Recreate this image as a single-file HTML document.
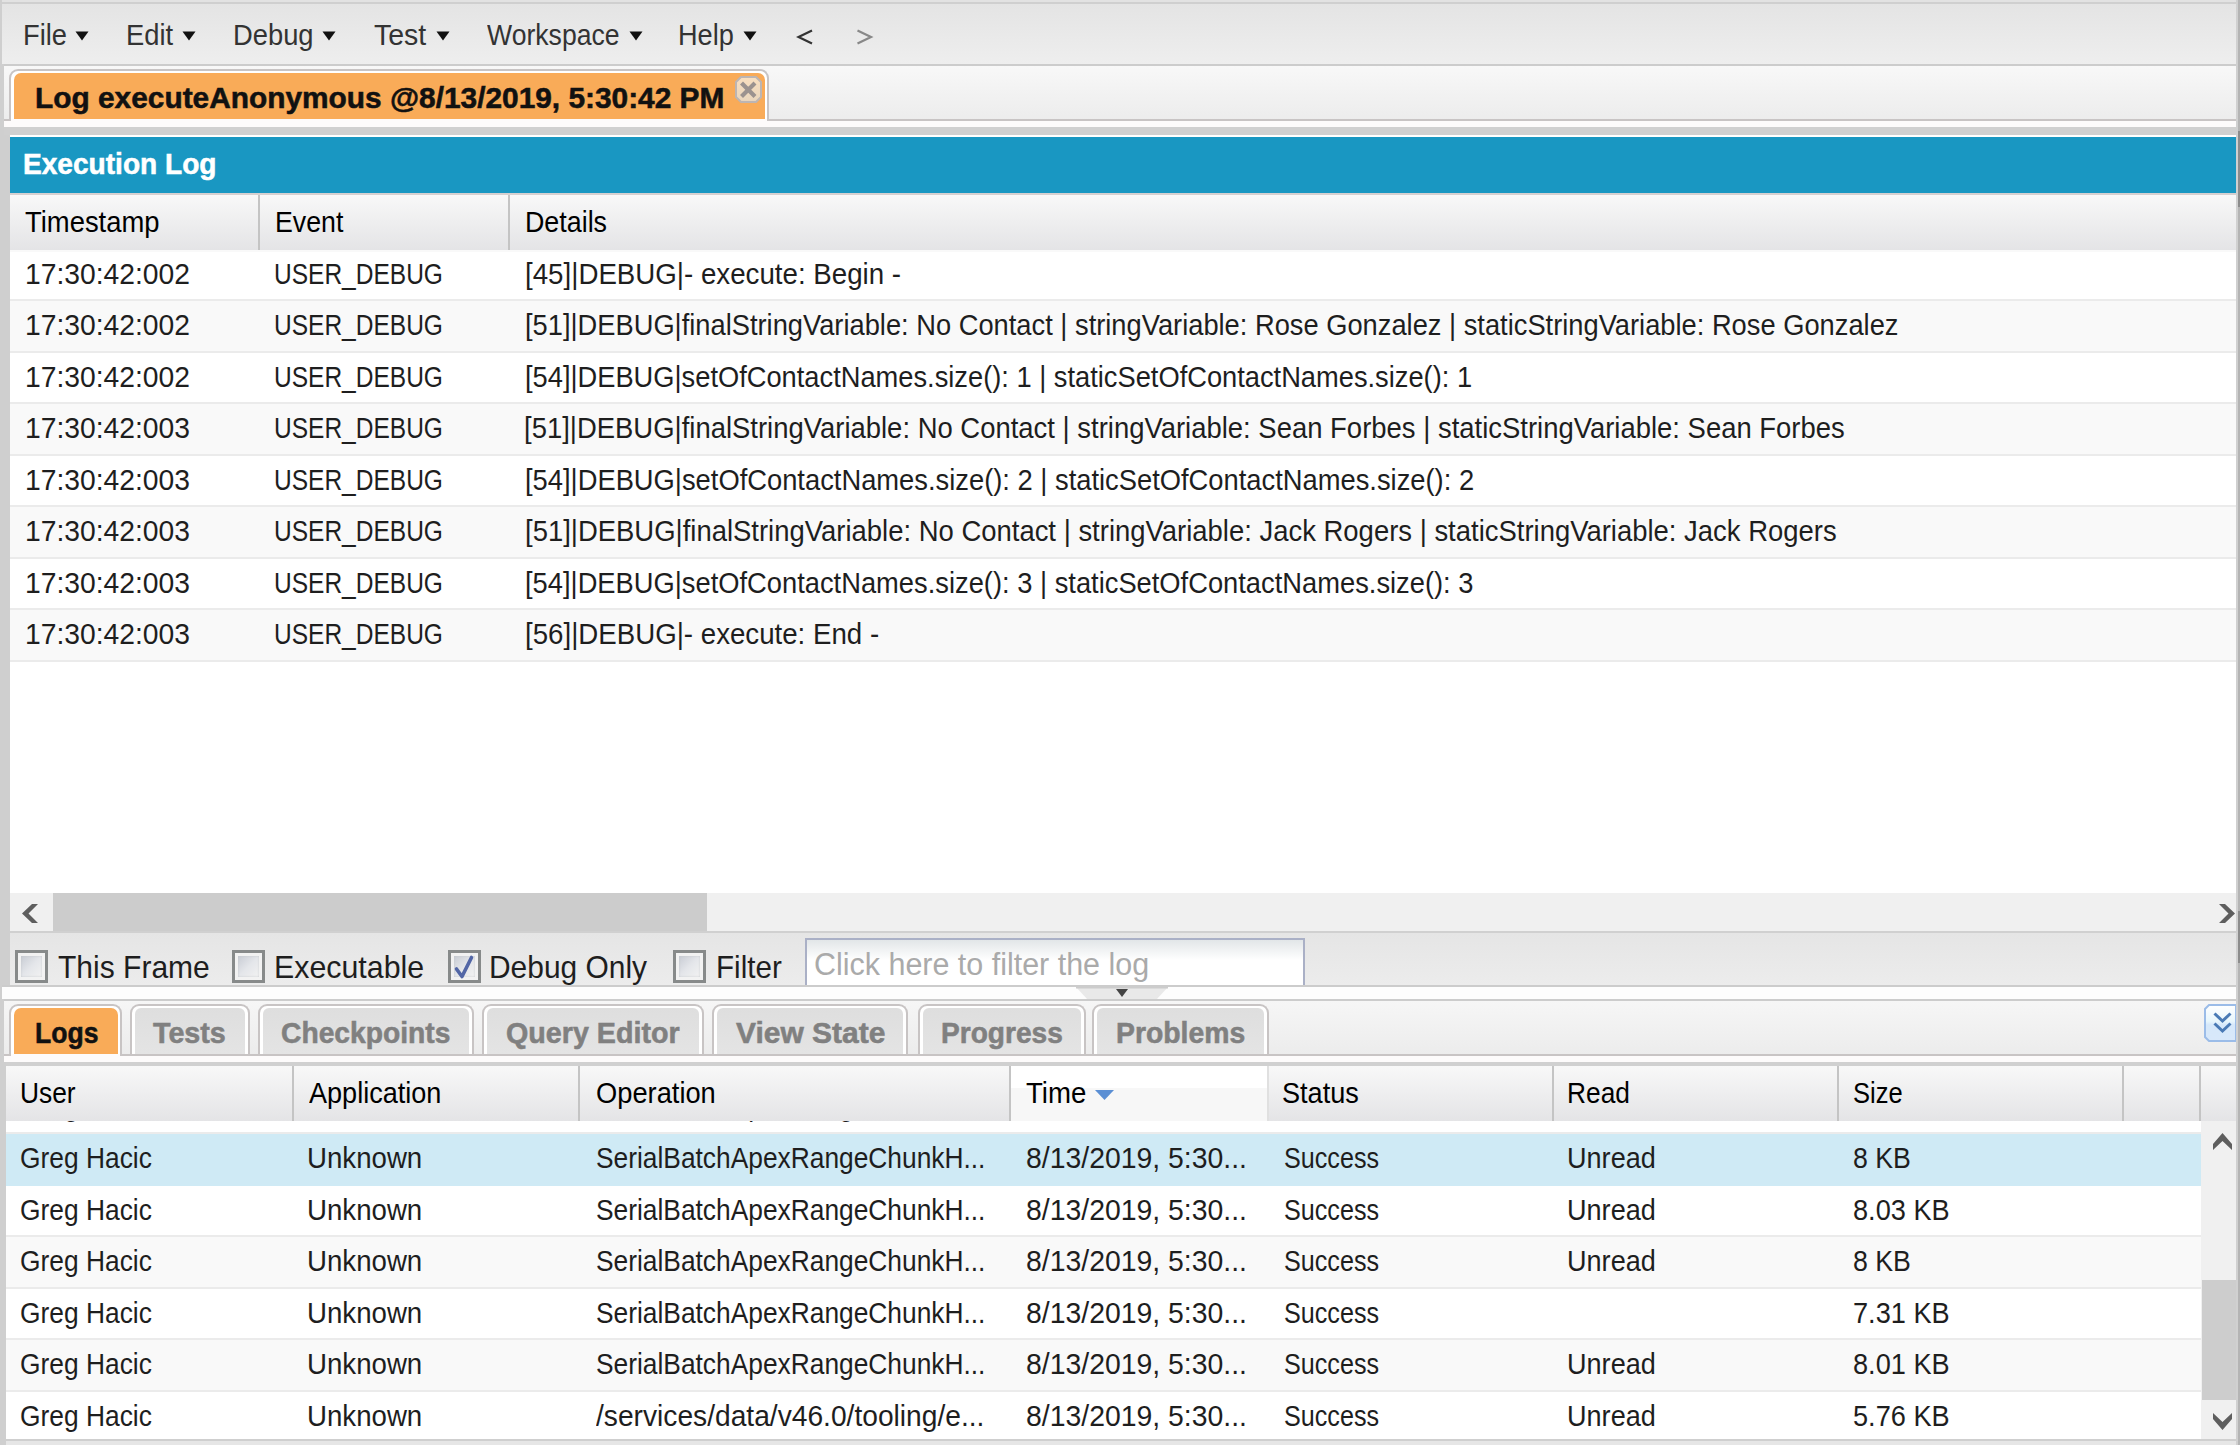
<!DOCTYPE html>
<html><head><meta charset="utf-8"><style>
html,body{margin:0;padding:0;overflow:hidden;}
body{width:2240px;height:1445px;overflow:hidden;position:relative;background:#fff;font-family:"Liberation Sans",sans-serif;}
body div, body svg{position:absolute;}
.t{white-space:pre;transform-origin:0 0;}
</style></head><body><div style="left:0px;top:0px;width:2240px;height:1445px;background:#ffffff;"></div><div style="left:0px;top:0px;width:2236px;height:2px;background:#e2e2e2;"></div><div style="left:0px;top:2px;width:2236px;height:2px;background:#cfcfcf;"></div><div style="left:2px;top:4px;width:2234px;height:60px;background:linear-gradient(#e4e4e4,#eeeeee);"></div><div style="left:0px;top:64px;width:2236px;height:2px;background:#cccccc;"></div><div style="left:0px;top:0px;width:2px;height:64px;background:#cfcfcf;"></div><div style="left:0px;top:64px;width:4px;height:63px;background:#cfcfcf;"></div><div style="left:0px;top:127px;width:10px;height:860px;background:#cfcfcf;"></div><div style="left:0px;top:987px;width:2px;height:12px;background:#cfcfcf;"></div><div style="left:0px;top:999px;width:4px;height:63px;background:#cfcfcf;"></div><div style="left:0px;top:1062px;width:6px;height:383px;background:#cfcfcf;"></div><div style="left:2236px;top:0px;width:2px;height:1445px;background:#d0d0d0;"></div><div style="left:2238px;top:0px;width:2px;height:1445px;background:#b4b4b4;"></div><div style="left:2238px;top:131px;width:2px;height:76px;background:#8c8c8c;"></div><div style="left:2238px;top:911px;width:2px;height:52px;background:#8c8c8c;"></div><div class="t" style="left:22.84px;top:21px;font-size:29px;line-height:29px;color:#333333;transform:scaleX(0.9412);">File</div><svg style="left:75px;top:31px" width="14" height="10"><path d="M0.5 0.5 H13.5 L7 9.5 Z" fill="#111"/></svg><div class="t" style="left:125.91px;top:21px;font-size:29px;line-height:29px;color:#333333;transform:scaleX(0.9419);">Edit</div><svg style="left:182px;top:31px" width="14" height="10"><path d="M0.5 0.5 H13.5 L7 9.5 Z" fill="#111"/></svg><div class="t" style="left:232.92px;top:21px;font-size:29px;line-height:29px;color:#333333;transform:scaleX(0.9426);">Debug</div><svg style="left:322px;top:31px" width="14" height="10"><path d="M0.5 0.5 H13.5 L7 9.5 Z" fill="#111"/></svg><div class="t" style="left:374.00px;top:21px;font-size:29px;line-height:29px;color:#333333;transform:scaleX(0.9822);">Test</div><svg style="left:436px;top:31px" width="14" height="10"><path d="M0.5 0.5 H13.5 L7 9.5 Z" fill="#111"/></svg><div class="t" style="left:487.00px;top:21px;font-size:29px;line-height:29px;color:#333333;transform:scaleX(0.9173);">Workspace</div><svg style="left:629px;top:31px" width="14" height="10"><path d="M0.5 0.5 H13.5 L7 9.5 Z" fill="#111"/></svg><div class="t" style="left:677.88px;top:21px;font-size:29px;line-height:29px;color:#333333;transform:scaleX(0.9363);">Help</div><svg style="left:743px;top:31px" width="14" height="10"><path d="M0.5 0.5 H13.5 L7 9.5 Z" fill="#111"/></svg><svg style="left:796px;top:29px" width="18" height="16"><path d="M16 1.5 L2.5 8 L16 14.5" fill="none" stroke="#333" stroke-width="2.2"/></svg><svg style="left:856px;top:29px" width="18" height="16"><path d="M1.5 1.5 L15 8 L1.5 14.5" fill="none" stroke="#888" stroke-width="2.2"/></svg><div style="left:4px;top:66px;width:2232px;height:55px;background:linear-gradient(#f8f8f8,#ececec);"></div><div style="left:4px;top:119px;width:2232px;height:2px;background:#c8c4c4;"></div><div style="left:4px;top:121px;width:2232px;height:6px;background:#fdfbfb;"></div><div style="left:9px;top:69px;width:760px;height:52px;background:#ffffff;border:2px solid #c8c4c4;border-bottom:none;border-radius:9px 9px 0 0;box-sizing:border-box;"></div><div style="left:14px;top:73px;width:751px;height:48px;background:#f9ab58;border-radius:7px 7px 0 0;"></div><div style="left:11px;top:119px;width:756px;height:2px;background:#fdfbfb;"></div><div class="t" style="left:35.19px;top:84px;font-size:29px;line-height:29px;font-weight:bold;-webkit-text-stroke:0.55px currentColor;color:#111111;transform:scaleX(1.0293);">Log executeAnonymous @8/13/2019, 5:30:42 PM</div><svg style="left:735px;top:76px" width="27" height="27"><defs><linearGradient id="xg" x1="0" y1="0" x2="0" y2="1"><stop offset="0" stop-color="#f9dfc0"/><stop offset="1" stop-color="#e8d5bd"/></linearGradient></defs><path d="M6 1 H21 L26 6 V21 L21 26 H6 L1 21 V6 Z" fill="url(#xg)" stroke="#bdb5b2" stroke-width="2"/><path d="M8 8.5 L18.5 19 M18.5 8.5 L8 19" stroke="#9b928f" stroke-width="4.2" stroke-linecap="square"/></svg><div style="left:4px;top:127px;width:2232px;height:8px;background:#d0d0d0;"></div><div style="left:10px;top:135px;width:2226px;height:2px;background:#ffffff;"></div><div style="left:10px;top:137px;width:2226px;height:56px;background:#1997c2;"></div><div class="t" style="left:23.38px;top:150px;font-size:29px;line-height:29px;font-weight:bold;-webkit-text-stroke:0.55px currentColor;color:#ffffff;transform:scaleX(0.9683);">Execution Log</div><div style="left:10px;top:193px;width:2226px;height:2px;background:#d6d0d0;"></div><div style="left:10px;top:195px;width:2226px;height:55px;background:linear-gradient(#f8f8f8,#e4e4e6);"></div><div style="left:258px;top:195px;width:2px;height:55px;background:#c4c4c4;"></div><div style="left:508px;top:195px;width:2px;height:55px;background:#c4c4c4;"></div><div class="t" style="left:25.40px;top:208px;font-size:29px;line-height:29px;color:#000000;transform:scaleX(0.9451);">Timestamp</div><div class="t" style="left:274.74px;top:208px;font-size:29px;line-height:29px;color:#000000;transform:scaleX(0.9222);">Event</div><div class="t" style="left:524.72px;top:208px;font-size:29px;line-height:29px;color:#000000;transform:scaleX(0.9251);">Details</div><div style="left:10px;top:250px;width:2226px;height:49px;background:#ffffff;"></div><div style="left:10px;top:299px;width:2226px;height:2px;background:#ebebeb;"></div><div class="t" style="left:24.77px;top:260px;font-size:29px;line-height:29px;color:#1e1e1e;transform:scaleX(0.9742);">17:30:42:002</div><div class="t" style="left:273.96px;top:260px;font-size:29px;line-height:29px;color:#1e1e1e;transform:scaleX(0.8453);">USER_DEBUG</div><div class="t" style="left:525.18px;top:260px;font-size:29px;line-height:29px;color:#1e1e1e;transform:scaleX(0.9549);">[45]|DEBUG|- execute: Begin -</div><div style="left:10px;top:301px;width:2226px;height:50px;background:#f9f9f9;"></div><div style="left:10px;top:351px;width:2226px;height:2px;background:#ebebeb;"></div><div class="t" style="left:24.77px;top:311px;font-size:29px;line-height:29px;color:#1e1e1e;transform:scaleX(0.9742);">17:30:42:002</div><div class="t" style="left:273.96px;top:311px;font-size:29px;line-height:29px;color:#1e1e1e;transform:scaleX(0.8453);">USER_DEBUG</div><div class="t" style="left:525.19px;top:311px;font-size:29px;line-height:29px;color:#1e1e1e;transform:scaleX(0.9408);">[51]|DEBUG|finalStringVariable: No Contact | stringVariable: Rose Gonzalez | staticStringVariable: Rose Gonzalez</div><div style="left:10px;top:353px;width:2226px;height:49px;background:#ffffff;"></div><div style="left:10px;top:402px;width:2226px;height:2px;background:#ebebeb;"></div><div class="t" style="left:24.77px;top:363px;font-size:29px;line-height:29px;color:#1e1e1e;transform:scaleX(0.9742);">17:30:42:002</div><div class="t" style="left:273.96px;top:363px;font-size:29px;line-height:29px;color:#1e1e1e;transform:scaleX(0.8453);">USER_DEBUG</div><div class="t" style="left:525.19px;top:363px;font-size:29px;line-height:29px;color:#1e1e1e;transform:scaleX(0.9402);">[54]|DEBUG|setOfContactNames.size(): 1 | staticSetOfContactNames.size(): 1</div><div style="left:10px;top:404px;width:2226px;height:50px;background:#f9f9f9;"></div><div style="left:10px;top:454px;width:2226px;height:2px;background:#ebebeb;"></div><div class="t" style="left:24.77px;top:414px;font-size:29px;line-height:29px;color:#1e1e1e;transform:scaleX(0.9742);">17:30:42:003</div><div class="t" style="left:273.96px;top:414px;font-size:29px;line-height:29px;color:#1e1e1e;transform:scaleX(0.8453);">USER_DEBUG</div><div class="t" style="left:524.20px;top:414px;font-size:29px;line-height:29px;color:#1e1e1e;transform:scaleX(0.9465);">[51]|DEBUG|finalStringVariable: No Contact | stringVariable: Sean Forbes | staticStringVariable: Sean Forbes</div><div style="left:10px;top:456px;width:2226px;height:49px;background:#ffffff;"></div><div style="left:10px;top:505px;width:2226px;height:2px;background:#ebebeb;"></div><div class="t" style="left:24.77px;top:466px;font-size:29px;line-height:29px;color:#1e1e1e;transform:scaleX(0.9742);">17:30:42:003</div><div class="t" style="left:273.96px;top:466px;font-size:29px;line-height:29px;color:#1e1e1e;transform:scaleX(0.8453);">USER_DEBUG</div><div class="t" style="left:525.19px;top:466px;font-size:29px;line-height:29px;color:#1e1e1e;transform:scaleX(0.9422);">[54]|DEBUG|setOfContactNames.size(): 2 | staticSetOfContactNames.size(): 2</div><div style="left:10px;top:507px;width:2226px;height:50px;background:#f9f9f9;"></div><div style="left:10px;top:557px;width:2226px;height:2px;background:#ebebeb;"></div><div class="t" style="left:24.77px;top:517px;font-size:29px;line-height:29px;color:#1e1e1e;transform:scaleX(0.9742);">17:30:42:003</div><div class="t" style="left:273.96px;top:517px;font-size:29px;line-height:29px;color:#1e1e1e;transform:scaleX(0.8453);">USER_DEBUG</div><div class="t" style="left:525.19px;top:517px;font-size:29px;line-height:29px;color:#1e1e1e;transform:scaleX(0.9466);">[51]|DEBUG|finalStringVariable: No Contact | stringVariable: Jack Rogers | staticStringVariable: Jack Rogers</div><div style="left:10px;top:559px;width:2226px;height:49px;background:#ffffff;"></div><div style="left:10px;top:608px;width:2226px;height:2px;background:#ebebeb;"></div><div class="t" style="left:24.77px;top:569px;font-size:29px;line-height:29px;color:#1e1e1e;transform:scaleX(0.9742);">17:30:42:003</div><div class="t" style="left:273.96px;top:569px;font-size:29px;line-height:29px;color:#1e1e1e;transform:scaleX(0.8453);">USER_DEBUG</div><div class="t" style="left:525.19px;top:569px;font-size:29px;line-height:29px;color:#1e1e1e;transform:scaleX(0.9416);">[54]|DEBUG|setOfContactNames.size(): 3 | staticSetOfContactNames.size(): 3</div><div style="left:10px;top:610px;width:2226px;height:50px;background:#f9f9f9;"></div><div style="left:10px;top:660px;width:2226px;height:2px;background:#ebebeb;"></div><div class="t" style="left:24.77px;top:620px;font-size:29px;line-height:29px;color:#1e1e1e;transform:scaleX(0.9742);">17:30:42:003</div><div class="t" style="left:273.96px;top:620px;font-size:29px;line-height:29px;color:#1e1e1e;transform:scaleX(0.8453);">USER_DEBUG</div><div class="t" style="left:525.18px;top:620px;font-size:29px;line-height:29px;color:#1e1e1e;transform:scaleX(0.9537);">[56]|DEBUG|- execute: End -</div><div style="left:10px;top:250px;width:2226px;height:2px;background:#f9f9f9;"></div><div style="left:10px;top:893px;width:2226px;height:38px;background:#f0f0f0;"></div><div style="left:53px;top:893px;width:654px;height:38px;background:#cccccc;"></div><svg style="left:22px;top:904px" width="17" height="19"><path d="M16 0 H10 L0 9.5 L10 19 H16 L6.5 9.5 Z" fill="#5e5e5e"/></svg><svg style="left:2219px;top:904px" width="17" height="19"><path d="M0 0 H6 L16 9.5 L6 19 H0 L9.5 9.5 Z" fill="#5e5e5e"/></svg><div style="left:10px;top:931px;width:2226px;height:2px;background:#d0d0d0;"></div><div style="left:10px;top:933px;width:2226px;height:52px;background:linear-gradient(#e5e5e5,#ececec);"></div><div style="left:2px;top:985px;width:2234px;height:2px;background:#cccccc;"></div><div style="left:2px;top:987px;width:2234px;height:12px;background:#fdfdfd;"></div><div style="left:15px;top:950px;width:33px;height:33px;box-sizing:border-box;border:3px solid #878a8a;background:#f2f2f2;"></div><div style="left:21px;top:956px;width:21px;height:21px;background:linear-gradient(135deg,#c8ccd4 0%,#e4e6ea 50%,#f2f2f2 100%);box-shadow:inset 0 0 2px #c0c4c8;"></div><div class="t" style="left:58.00px;top:951px;font-size:32px;line-height:32px;color:#1e1e1e;transform:scaleX(0.9383);">This Frame</div><div style="left:232px;top:950px;width:33px;height:33px;box-sizing:border-box;border:3px solid #878a8a;background:#f2f2f2;"></div><div style="left:238px;top:956px;width:21px;height:21px;background:linear-gradient(135deg,#c8ccd4 0%,#e4e6ea 50%,#f2f2f2 100%);box-shadow:inset 0 0 2px #c0c4c8;"></div><div class="t" style="left:274.15px;top:951px;font-size:32px;line-height:32px;color:#1e1e1e;transform:scaleX(0.9485);">Executable</div><div style="left:448px;top:950px;width:33px;height:33px;box-sizing:border-box;border:3px solid #878a8a;background:#f2f2f2;"></div><div style="left:454px;top:956px;width:21px;height:21px;background:linear-gradient(135deg,#c8ccd4 0%,#e4e6ea 50%,#f2f2f2 100%);box-shadow:inset 0 0 2px #c0c4c8;"></div><svg style="left:448px;top:950px" width="33" height="33"><path d="M8.5 19 L14 26.5 L23.5 7.5" fill="none" stroke="#5266a6" stroke-width="3.6" stroke-linecap="round" stroke-linejoin="round"/></svg><div class="t" style="left:488.97px;top:951px;font-size:32px;line-height:32px;color:#1e1e1e;transform:scaleX(0.9351);">Debug Only</div><div style="left:673px;top:950px;width:33px;height:33px;box-sizing:border-box;border:3px solid #878a8a;background:#f2f2f2;"></div><div style="left:679px;top:956px;width:21px;height:21px;background:linear-gradient(135deg,#c8ccd4 0%,#e4e6ea 50%,#f2f2f2 100%);box-shadow:inset 0 0 2px #c0c4c8;"></div><div class="t" style="left:715.75px;top:951px;font-size:32px;line-height:32px;color:#1e1e1e;transform:scaleX(0.9248);">Filter</div><div style="left:805px;top:938px;width:500px;height:47px;box-sizing:border-box;border:2px solid #aab0c6;border-bottom:none;background:linear-gradient(#e2e6e8,#ffffff 45%);"></div><div class="t" style="left:814.20px;top:949px;font-size:31px;line-height:31px;color:#aaaaaa;transform:scaleX(0.9824);">Click here to filter the log</div><svg style="left:1076px;top:987px" width="92" height="14"><path d="M0 0 H92 L80 13 H12 Z" fill="#e9e9e9"/><path d="M0 0 H92" stroke="#cccccc" stroke-width="3"/><path d="M40 2 H52 L46 10 Z" fill="#444"/></svg><div style="left:4px;top:999px;width:2232px;height:2px;background:#cccccc;"></div><div style="left:4px;top:1001px;width:2232px;height:53px;background:linear-gradient(#f6f6f6,#ececec);"></div><div style="left:4px;top:1054px;width:2232px;height:2px;background:#c8c4c4;"></div><div style="left:4px;top:1056px;width:2232px;height:6px;background:#fdfbfb;"></div><div style="left:6px;top:1062px;width:2230px;height:4px;background:#d0d0d0;"></div><div style="left:9px;top:1004px;width:113px;height:52px;background:#ffffff;border:2px solid #c8c4c4;border-bottom:none;border-radius:9px 9px 0 0;box-sizing:border-box;"></div><div style="left:14px;top:1008px;width:104px;height:46px;background:#f9ab58;border-radius:7px 7px 0 0;"></div><div style="left:11px;top:1054px;width:109px;height:2px;background:#fdfbfb;"></div><div class="t" style="left:34.57px;top:1019px;font-size:29px;line-height:29px;font-weight:bold;-webkit-text-stroke:0.55px currentColor;color:#111111;transform:scaleX(0.9163);">Logs</div><div style="left:130px;top:1004px;width:120px;height:52px;background:#ffffff;border:2px solid #c8c4c4;border-bottom:none;border-radius:9px 9px 0 0;box-sizing:border-box;"></div><div style="left:135px;top:1008px;width:110px;height:46px;background:linear-gradient(#dedede,#e4e4e4);border-radius:6px 6px 0 0;"></div><div style="left:130px;top:1054px;width:120px;height:2px;background:#c8c4c4;"></div><div class="t" style="left:153.40px;top:1019px;font-size:29px;line-height:29px;font-weight:bold;-webkit-text-stroke:0.55px currentColor;color:#808080;transform:scaleX(0.9893);">Tests</div><div style="left:258px;top:1004px;width:216px;height:52px;background:#ffffff;border:2px solid #c8c4c4;border-bottom:none;border-radius:9px 9px 0 0;box-sizing:border-box;"></div><div style="left:263px;top:1008px;width:206px;height:46px;background:linear-gradient(#dedede,#e4e4e4);border-radius:6px 6px 0 0;"></div><div style="left:258px;top:1054px;width:216px;height:2px;background:#c8c4c4;"></div><div class="t" style="left:280.59px;top:1019px;font-size:29px;line-height:29px;font-weight:bold;-webkit-text-stroke:0.55px currentColor;color:#808080;transform:scaleX(0.9736);">Checkpoints</div><div style="left:482px;top:1004px;width:222px;height:52px;background:#ffffff;border:2px solid #c8c4c4;border-bottom:none;border-radius:9px 9px 0 0;box-sizing:border-box;"></div><div style="left:487px;top:1008px;width:212px;height:46px;background:linear-gradient(#dedede,#e4e4e4);border-radius:6px 6px 0 0;"></div><div style="left:482px;top:1054px;width:222px;height:2px;background:#c8c4c4;"></div><div class="t" style="left:505.99px;top:1019px;font-size:29px;line-height:29px;font-weight:bold;-webkit-text-stroke:0.55px currentColor;color:#808080;transform:scaleX(0.9887);">Query Editor</div><div style="left:712px;top:1004px;width:196px;height:52px;background:#ffffff;border:2px solid #c8c4c4;border-bottom:none;border-radius:9px 9px 0 0;box-sizing:border-box;"></div><div style="left:717px;top:1008px;width:186px;height:46px;background:linear-gradient(#dedede,#e4e4e4);border-radius:6px 6px 0 0;"></div><div style="left:712px;top:1054px;width:196px;height:2px;background:#c8c4c4;"></div><div class="t" style="left:736.00px;top:1019px;font-size:29px;line-height:29px;font-weight:bold;-webkit-text-stroke:0.55px currentColor;color:#808080;transform:scaleX(1.0332);">View State</div><div style="left:918px;top:1004px;width:168px;height:52px;background:#ffffff;border:2px solid #c8c4c4;border-bottom:none;border-radius:9px 9px 0 0;box-sizing:border-box;"></div><div style="left:923px;top:1008px;width:158px;height:46px;background:linear-gradient(#dedede,#e4e4e4);border-radius:6px 6px 0 0;"></div><div style="left:918px;top:1054px;width:168px;height:2px;background:#c8c4c4;"></div><div class="t" style="left:940.97px;top:1019px;font-size:29px;line-height:29px;font-weight:bold;-webkit-text-stroke:0.55px currentColor;color:#808080;transform:scaleX(0.9686);">Progress</div><div style="left:1092px;top:1004px;width:177px;height:52px;background:#ffffff;border:2px solid #c8c4c4;border-bottom:none;border-radius:9px 9px 0 0;box-sizing:border-box;"></div><div style="left:1097px;top:1008px;width:167px;height:46px;background:linear-gradient(#dedede,#e4e4e4);border-radius:6px 6px 0 0;"></div><div style="left:1092px;top:1054px;width:177px;height:2px;background:#c8c4c4;"></div><div class="t" style="left:1115.97px;top:1019px;font-size:29px;line-height:29px;font-weight:bold;-webkit-text-stroke:0.55px currentColor;color:#808080;transform:scaleX(0.9777);">Problems</div><svg style="left:2204px;top:1004px" width="32" height="38"><defs><linearGradient id="cg" x1="0" y1="0" x2="0" y2="1"><stop offset="0" stop-color="#ffffff"/><stop offset="0.45" stop-color="#e8f6fc"/><stop offset="0.55" stop-color="#d6e8fa"/><stop offset="1" stop-color="#d8e8fa"/></linearGradient></defs><path d="M5 1 H32 V37 H5 L1 33 V5 Z" fill="url(#cg)" stroke="#9bbce8" stroke-width="2"/><path d="M10.5 9.5 L18.5 17 L26.5 9.5 M10.5 19.5 L18.5 27 L26.5 19.5" fill="none" stroke="#4a7ab5" stroke-width="3"/></svg><div style="left:6px;top:1066px;width:2230px;height:55px;background:linear-gradient(#f8f8f8,#e4e4e6);"></div><div style="left:1011px;top:1066px;width:256px;height:22px;background:#ffffff;"></div><div style="left:1011px;top:1088px;width:256px;height:33px;background:#f7f7f7;"></div><div style="left:292px;top:1066px;width:2px;height:55px;background:#c4c4c4;"></div><div style="left:578px;top:1066px;width:2px;height:55px;background:#c4c4c4;"></div><div style="left:1009px;top:1066px;width:2px;height:55px;background:#c4c4c4;"></div><div style="left:1267px;top:1066px;width:2px;height:55px;background:#e0e0e0;"></div><div style="left:1552px;top:1066px;width:2px;height:55px;background:#c4c4c4;"></div><div style="left:1837px;top:1066px;width:2px;height:55px;background:#c4c4c4;"></div><div style="left:2122px;top:1066px;width:2px;height:55px;background:#c4c4c4;"></div><div style="left:2199px;top:1066px;width:2px;height:55px;background:#c4c4c4;"></div><div class="t" style="left:19.69px;top:1079px;font-size:29px;line-height:29px;color:#000000;transform:scaleX(0.9087);">User</div><div class="t" style="left:308.50px;top:1079px;font-size:29px;line-height:29px;color:#000000;transform:scaleX(0.9332);">Application</div><div class="t" style="left:595.57px;top:1079px;font-size:29px;line-height:29px;color:#000000;transform:scaleX(0.9405);">Operation</div><div class="t" style="left:1026.00px;top:1079px;font-size:29px;line-height:29px;color:#000000;transform:scaleX(0.9526);">Time</div><div class="t" style="left:1282.39px;top:1079px;font-size:29px;line-height:29px;color:#000000;transform:scaleX(0.9345);">Status</div><div class="t" style="left:1567.46px;top:1079px;font-size:29px;line-height:29px;color:#000000;transform:scaleX(0.9071);">Read</div><div class="t" style="left:1852.55px;top:1079px;font-size:29px;line-height:29px;color:#000000;transform:scaleX(0.8797);">Size</div><svg style="left:1095px;top:1090px" width="19" height="10"><path d="M0 0 H19 L9.5 10 Z" fill="#5b8fd4"/></svg><div style="left:6px;top:1121px;width:2195px;height:318px;background:#ffffff;"></div><div style="left:6px;top:1121px;width:2195px;height:11px;overflow:hidden;"><div style="position:absolute;left:-6px;top:-1121px;width:2240px;height:1445px;"><div class="t" style="left:20.40px;top:1092px;font-size:29px;line-height:29px;color:#1e1e1e;transform:scaleX(0.9091);">Greg Hacic</div><div class="t" style="left:307.35px;top:1092px;font-size:29px;line-height:29px;color:#1e1e1e;transform:scaleX(0.9531);">Unknown</div><div class="t" style="left:595.99px;top:1092px;font-size:29px;line-height:29px;color:#1e1e1e;transform:scaleX(0.9082);">SerialBatchApexRangeChunkH...</div><div class="t" style="left:1025.58px;top:1092px;font-size:29px;line-height:29px;color:#1e1e1e;transform:scaleX(0.9790);">8/13/2019, 5:30...</div></div></div><div style="left:6px;top:1132px;width:2195px;height:2px;background:#ebebeb;"></div><div style="left:6px;top:1134px;width:2195px;height:50px;background:#cfeaf5;"></div><div style="left:6px;top:1184px;width:2195px;height:2px;background:#cfeaf5;"></div><div class="t" style="left:20.40px;top:1144px;font-size:29px;line-height:29px;color:#1e1e1e;transform:scaleX(0.9091);">Greg Hacic</div><div class="t" style="left:307.35px;top:1144px;font-size:29px;line-height:29px;color:#1e1e1e;transform:scaleX(0.9531);">Unknown</div><div class="t" style="left:595.99px;top:1144px;font-size:29px;line-height:29px;color:#1e1e1e;transform:scaleX(0.9082);">SerialBatchApexRangeChunkH...</div><div class="t" style="left:1025.58px;top:1144px;font-size:29px;line-height:29px;color:#1e1e1e;transform:scaleX(0.9790);">8/13/2019, 5:30...</div><div class="t" style="left:1283.57px;top:1144px;font-size:29px;line-height:29px;color:#1e1e1e;transform:scaleX(0.8676);">Success</div><div class="t" style="left:1566.93px;top:1144px;font-size:29px;line-height:29px;color:#1e1e1e;transform:scaleX(0.9337);">Unread</div><div class="t" style="left:1852.94px;top:1144px;font-size:29px;line-height:29px;color:#1e1e1e;transform:scaleX(0.9218);">8 KB</div><div style="left:6px;top:1186px;width:2195px;height:49px;background:#ffffff;"></div><div style="left:6px;top:1235px;width:2195px;height:2px;background:#ebebeb;"></div><div class="t" style="left:20.40px;top:1196px;font-size:29px;line-height:29px;color:#1e1e1e;transform:scaleX(0.9091);">Greg Hacic</div><div class="t" style="left:307.35px;top:1196px;font-size:29px;line-height:29px;color:#1e1e1e;transform:scaleX(0.9531);">Unknown</div><div class="t" style="left:595.99px;top:1196px;font-size:29px;line-height:29px;color:#1e1e1e;transform:scaleX(0.9082);">SerialBatchApexRangeChunkH...</div><div class="t" style="left:1025.58px;top:1196px;font-size:29px;line-height:29px;color:#1e1e1e;transform:scaleX(0.9790);">8/13/2019, 5:30...</div><div class="t" style="left:1283.57px;top:1196px;font-size:29px;line-height:29px;color:#1e1e1e;transform:scaleX(0.8676);">Success</div><div class="t" style="left:1566.93px;top:1196px;font-size:29px;line-height:29px;color:#1e1e1e;transform:scaleX(0.9337);">Unread</div><div class="t" style="left:1852.97px;top:1196px;font-size:29px;line-height:29px;color:#1e1e1e;transform:scaleX(0.9365);">8.03 KB</div><div style="left:6px;top:1237px;width:2195px;height:50px;background:#f9f9f9;"></div><div style="left:6px;top:1287px;width:2195px;height:2px;background:#ebebeb;"></div><div class="t" style="left:20.40px;top:1247px;font-size:29px;line-height:29px;color:#1e1e1e;transform:scaleX(0.9091);">Greg Hacic</div><div class="t" style="left:307.35px;top:1247px;font-size:29px;line-height:29px;color:#1e1e1e;transform:scaleX(0.9531);">Unknown</div><div class="t" style="left:595.99px;top:1247px;font-size:29px;line-height:29px;color:#1e1e1e;transform:scaleX(0.9082);">SerialBatchApexRangeChunkH...</div><div class="t" style="left:1025.58px;top:1247px;font-size:29px;line-height:29px;color:#1e1e1e;transform:scaleX(0.9790);">8/13/2019, 5:30...</div><div class="t" style="left:1283.57px;top:1247px;font-size:29px;line-height:29px;color:#1e1e1e;transform:scaleX(0.8676);">Success</div><div class="t" style="left:1566.93px;top:1247px;font-size:29px;line-height:29px;color:#1e1e1e;transform:scaleX(0.9337);">Unread</div><div class="t" style="left:1852.94px;top:1247px;font-size:29px;line-height:29px;color:#1e1e1e;transform:scaleX(0.9218);">8 KB</div><div style="left:6px;top:1289px;width:2195px;height:49px;background:#ffffff;"></div><div style="left:6px;top:1338px;width:2195px;height:2px;background:#ebebeb;"></div><div class="t" style="left:20.40px;top:1299px;font-size:29px;line-height:29px;color:#1e1e1e;transform:scaleX(0.9091);">Greg Hacic</div><div class="t" style="left:307.35px;top:1299px;font-size:29px;line-height:29px;color:#1e1e1e;transform:scaleX(0.9531);">Unknown</div><div class="t" style="left:595.99px;top:1299px;font-size:29px;line-height:29px;color:#1e1e1e;transform:scaleX(0.9082);">SerialBatchApexRangeChunkH...</div><div class="t" style="left:1025.58px;top:1299px;font-size:29px;line-height:29px;color:#1e1e1e;transform:scaleX(0.9790);">8/13/2019, 5:30...</div><div class="t" style="left:1283.57px;top:1299px;font-size:29px;line-height:29px;color:#1e1e1e;transform:scaleX(0.8676);">Success</div><div class="t" style="left:1852.97px;top:1299px;font-size:29px;line-height:29px;color:#1e1e1e;transform:scaleX(0.9365);">7.31 KB</div><div style="left:6px;top:1340px;width:2195px;height:50px;background:#f9f9f9;"></div><div style="left:6px;top:1390px;width:2195px;height:2px;background:#ebebeb;"></div><div class="t" style="left:20.40px;top:1350px;font-size:29px;line-height:29px;color:#1e1e1e;transform:scaleX(0.9091);">Greg Hacic</div><div class="t" style="left:307.35px;top:1350px;font-size:29px;line-height:29px;color:#1e1e1e;transform:scaleX(0.9531);">Unknown</div><div class="t" style="left:595.99px;top:1350px;font-size:29px;line-height:29px;color:#1e1e1e;transform:scaleX(0.9082);">SerialBatchApexRangeChunkH...</div><div class="t" style="left:1025.58px;top:1350px;font-size:29px;line-height:29px;color:#1e1e1e;transform:scaleX(0.9790);">8/13/2019, 5:30...</div><div class="t" style="left:1283.57px;top:1350px;font-size:29px;line-height:29px;color:#1e1e1e;transform:scaleX(0.8676);">Success</div><div class="t" style="left:1566.93px;top:1350px;font-size:29px;line-height:29px;color:#1e1e1e;transform:scaleX(0.9337);">Unread</div><div class="t" style="left:1852.97px;top:1350px;font-size:29px;line-height:29px;color:#1e1e1e;transform:scaleX(0.9365);">8.01 KB</div><div style="left:6px;top:1392px;width:2195px;height:49px;background:#ffffff;"></div><div style="left:6px;top:1441px;width:2195px;height:2px;background:#ebebeb;"></div><div class="t" style="left:20.40px;top:1402px;font-size:29px;line-height:29px;color:#1e1e1e;transform:scaleX(0.9091);">Greg Hacic</div><div class="t" style="left:307.35px;top:1402px;font-size:29px;line-height:29px;color:#1e1e1e;transform:scaleX(0.9531);">Unknown</div><div class="t" style="left:596.00px;top:1402px;font-size:29px;line-height:29px;color:#1e1e1e;transform:scaleX(0.9715);">/services/data/v46.0/tooling/e...</div><div class="t" style="left:1025.58px;top:1402px;font-size:29px;line-height:29px;color:#1e1e1e;transform:scaleX(0.9790);">8/13/2019, 5:30...</div><div class="t" style="left:1283.57px;top:1402px;font-size:29px;line-height:29px;color:#1e1e1e;transform:scaleX(0.8676);">Success</div><div class="t" style="left:1566.93px;top:1402px;font-size:29px;line-height:29px;color:#1e1e1e;transform:scaleX(0.9337);">Unread</div><div class="t" style="left:1852.97px;top:1402px;font-size:29px;line-height:29px;color:#1e1e1e;transform:scaleX(0.9365);">5.76 KB</div><div style="left:2201px;top:1121px;width:35px;height:318px;background:#f0f0f0;"></div><div style="left:2202px;top:1280px;width:34px;height:120px;background:#cdcdcd;"></div><svg style="left:2213px;top:1133px" width="19" height="17"><path d="M0 17 V11 L9.5 0 L19 11 V17 L9.5 8 Z" fill="#5e5e5e"/></svg><svg style="left:2213px;top:1413px" width="19" height="17"><path d="M0 0 V6 L9.5 17 L19 6 V0 L9.5 9 Z" fill="#5e5e5e"/></svg><div style="left:6px;top:1439px;width:2230px;height:2px;background:#cfcfcf;"></div><div style="left:6px;top:1441px;width:2230px;height:4px;background:#e6e6e6;"></div></body></html>
